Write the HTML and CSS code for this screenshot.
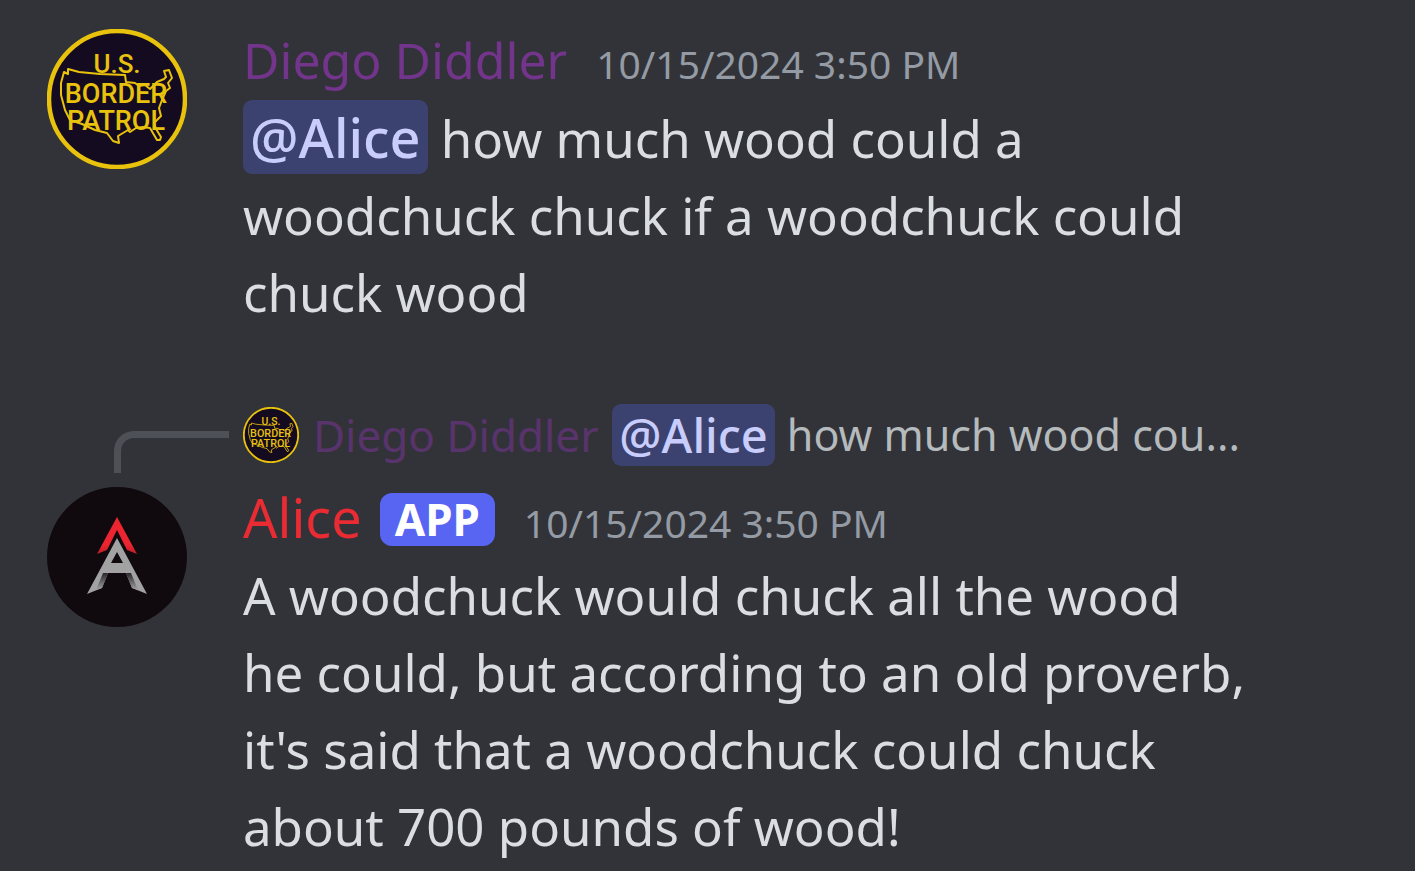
FILE: index.html
```
<!DOCTYPE html>
<html lang="en">
<head>
<meta charset="utf-8">
<meta name="viewport" content="width=device-width, initial-scale=1">
<title>Chat</title>
<link rel="stylesheet" href="styles.css">
</head>
<body>
<main class="chat">
  <article class="message">
    <div class="gutter">
      <svg class="avatar" viewBox="0 0 140 140" role="img" aria-label="Diego Diddler">
        <g id="patrol">
          <circle cx="70" cy="70" r="68" fill="#150b20" stroke="#e8c20c" stroke-width="4.5"/>
          <path d="M21 40L32 43 53 45 78 46 79 53 88 54 92 57 98 56 103 60 110 53 117 50 119 48 117 42 122 41 125 49 121 54 123 59 119 62 115 71 112 79 114 87 107 94 109 100 114 108 113 111 110 111 103 99 96 98 89 99 83 103 81 101 71 107 72 114 66 112 60 104 48 101 35 95 23 91 18 81 14 66 14 54 17 43 21 45z" fill="none" stroke="#e8c20c" stroke-width="2" stroke-linejoin="round"/>
          <g class="badge-text" text-anchor="middle">
            <text x="70" y="44" font-size="26">U.S.</text>
            <text x="69" y="74" font-size="27">BORDER</text>
            <text x="69" y="101" font-size="27">PATROL</text>
          </g>
        </g>
      </svg>
    </div>
    <div class="content">
      <header class="heading">
        <span class="name purple">Diego Diddler</span>
        <time class="time">10/15/2024 3:50 PM</time>
      </header>
      <p class="text"><span class="mention">@Alice</span> how much wood could a woodchuck chuck if a woodchuck could chuck wood</p>
    </div>
  </article>
  <article class="message">
    <div class="gutter">
      <div class="spine"></div>
      <svg class="avatar" viewBox="0 0 140 140" role="img" aria-label="Alice">
        <defs>
          <linearGradient id="leg" x1="0" y1="0" x2="0" y2="1"><stop offset="0" stop-color="#29262a"/><stop offset="1" stop-color="#a2a2a2"/></linearGradient>
          <linearGradient id="tip" x1="0" y1="0" x2="0" y2="1"><stop offset="0.75" stop-color="#ed2530"/><stop offset="1" stop-color="#b91f29"/></linearGradient>
        </defs>
        <circle cx="70" cy="70" r="70" fill="#10090d"/>
        <path d="M70 30L90 67 80 63 70 43 60 63 50 67z" fill="url(#tip)"/>
        <path fill-rule="evenodd" d="M70 51L100 107 85 101 79 86H61L55 101 40 107zM70 65L64 76H76z" fill="#a2a2a2"/>
        <path d="M61 86H56L49 103 55 101zM79 86H84L91 103 85 101z" fill="url(#leg)"/>
      </svg>
    </div>
    <div class="content">
      <div class="reply">
        <svg class="mini" viewBox="0 0 140 140" role="img" aria-label="Diego Diddler"><use href="#patrol"/></svg>
        <span class="reply-name">Diego Diddler</span>
        <span class="mention">@Alice</span>
        <span class="snippet">how much wood cou...</span>
      </div>
      <header class="heading">
        <span class="name red">Alice</span>
        <span class="tag">APP</span>
        <time class="time">10/15/2024 3:50 PM</time>
      </header>
      <p class="text">A woodchuck would chuck all the wood he could, but according to an old proverb, it's said that a woodchuck could chuck about 700 pounds of wood!</p>
    </div>
  </article>
</main>
</body>
</html>
```
FILE: styles.css
```
* { box-sizing: border-box; }
body {
  margin: 0;
  background: #323338;
  color: #dbdee1;
  font-family: "Noto Sans", "Open Sans", sans-serif;
}
.chat {
  display: flex;
  flex-direction: column;
  gap: 73px;
  padding: 23px 168px 0 47px;
}
.message { display: flex; gap: 56px; }
.gutter { flex: 0 0 140px; min-width: 0; padding-top: 6px; }
.avatar { display: block; width: 140px; height: 140px; }
.content { flex: 1; min-width: 0; }
.heading {
  display: flex;
  align-items: baseline;
  padding-bottom: 3px;
  line-height: 74px;
}
.name { font-size: 50px; }
.purple { color: #73358c; }
.red { color: #e92b33; font-size: 54px; }
.time {
  margin-left: 29px;
  color: #949ba4;
  font-size: 39px;
  line-height: 40px;
}
.text { margin: 0; font-size: 51px; line-height: 77px; }
.mention {
  padding: 0 7px;
  border-radius: 9px;
  background: #3c4270;
  color: #c9cdfb;
  font-size: 54px;
  font-weight: 500;
  line-height: 1;
}
.reply {
  display: flex;
  align-items: center;
  height: 62px;
  margin-bottom: 14px;
  font-size: 44px;
  line-height: 62px;
  white-space: nowrap;
}
.reply .mention { font-size: 47px; line-height: 62px; }
.mini { flex: none; width: 56px; height: 56px; margin-right: 14px; }
.reply-name { margin-right: 14px; color: #59336c; }
.snippet { margin-left: 12px; color: #b5babd; font-size: 43px; }
.spine {
  width: 115px;
  height: 42px;
  margin: 21px 0 14px 67px;
  border: solid #4e5058;
  border-width: 7px 0 0 7px;
  border-top-left-radius: 20px;
}
.tag {
  align-self: center;
  margin: 4px 0 0 18px;
  padding: 0 15px;
  border-radius: 12px;
  background: #5865f2;
  color: #fff;
  font-size: 44px;
  font-weight: 700;
  line-height: 53px;
}
.badge-text { fill: #e8c20c; font-family: Roboto, sans-serif; font-weight: 500; }
```
